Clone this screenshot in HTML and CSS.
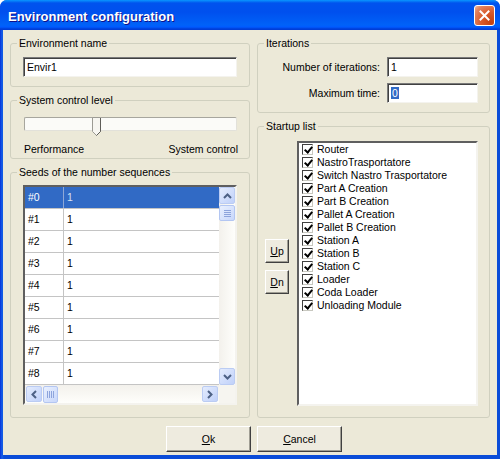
FILE: index.html
```html
<!DOCTYPE html>
<html lang="en">
<head>
    <meta charset="UTF-8">
    <title>Environment configuration</title>
    <link rel="stylesheet" href="styles.css">
</head>
<body>
    <div class="window">
        <div class="titlebar">
            <span class="title">Environment configuration</span>
            <span class="close">
                <svg width="11" height="11" viewBox="0 0 11 11"><path d="M1.5 1.5 L9.5 9.5 M9.5 1.5 L1.5 9.5" stroke="#fff" stroke-width="2" stroke-linecap="square"/></svg>
            </span>
        </div>

        <div class="client">
            <div class="columns">
                <!-- Left column -->
                <div class="col col-left">
                    <fieldset class="group group-name">
                        <legend>Environment name</legend>
                        <div class="name-body">
                            <div class="textbox">Envir1</div>
                        </div>
                    </fieldset>

                    <fieldset class="group group-level">
                        <legend>System control level</legend>
                        <div class="level-body">
                            <div class="slider">
                                <div class="track"></div>
                                <svg class="thumb" width="10" height="19" viewBox="0 0 10 19"><path d="M0.5 0.5 H8.5 V14.5 L4.5 18.5 L0.5 14.5 Z" fill="#F7F6F1" stroke="#9C9B94"/><path d="M8.5 1 V14.5 L4.5 18.5" fill="none" stroke="#5E5D58"/></svg>
                            </div>
                            <div class="slider-labels">
                                <span>Performance</span>
                                <span>System control</span>
                            </div>
                        </div>
                    </fieldset>

                    <fieldset class="group group-seeds">
                        <legend>Seeds of the number sequences</legend>
                        <div class="seeds-body">
                            <div class="grid">
                                <div class="grid-main">
                                    <div class="rows">
                                        <div class="row selected"><span class="cell-key">#0</span><span class="cell-val">1</span></div>
                                        <div class="row"><span class="cell-key">#1</span><span class="cell-val">1</span></div>
                                        <div class="row"><span class="cell-key">#2</span><span class="cell-val">1</span></div>
                                        <div class="row"><span class="cell-key">#3</span><span class="cell-val">1</span></div>
                                        <div class="row"><span class="cell-key">#4</span><span class="cell-val">1</span></div>
                                        <div class="row"><span class="cell-key">#5</span><span class="cell-val">1</span></div>
                                        <div class="row"><span class="cell-key">#6</span><span class="cell-val">1</span></div>
                                        <div class="row"><span class="cell-key">#7</span><span class="cell-val">1</span></div>
                                        <div class="row"><span class="cell-key">#8</span><span class="cell-val">1</span></div>
                                    </div>
                                    <div class="vscroll">
                                        <span class="sb-btn"><svg width="9" height="6" viewBox="0 0 9 6"><path d="M1 5 L4.5 1.5 L8 5" fill="none" stroke="#4D6185" stroke-width="2"/></svg></span>
                                        <span class="sb-thumb v-thumb"><i></i><i></i><i></i><i></i></span>
                                        <span class="sb-fill"></span>
                                        <span class="sb-btn"><svg width="9" height="6" viewBox="0 0 9 6"><path d="M1 1 L4.5 4.5 L8 1" fill="none" stroke="#4D6185" stroke-width="2"/></svg></span>
                                    </div>
                                </div>
                                <div class="grid-foot">
                                    <div class="hscroll">
                                        <span class="sb-btn"><svg width="6" height="9" viewBox="0 0 6 9"><path d="M5 1 L1.5 4.5 L5 8" fill="none" stroke="#4D6185" stroke-width="2"/></svg></span>
                                        <span class="sb-thumb h-thumb"><i></i><i></i><i></i><i></i></span>
                                        <span class="sb-fill"></span>
                                        <span class="sb-btn"><svg width="6" height="9" viewBox="0 0 6 9"><path d="M1 1 L4.5 4.5 L1 8" fill="none" stroke="#4D6185" stroke-width="2"/></svg></span>
                                    </div>
                                    <div class="corner"></div>
                                </div>
                            </div>
                        </div>
                    </fieldset>
                </div>

                <!-- Right column -->
                <div class="col col-right">
                    <fieldset class="group group-iter">
                        <legend>Iterations</legend>
                        <div class="iter-body">
                            <label>Number of iterations:</label>
                            <div class="textbox">1</div>
                            <label>Maximum time:</label>
                            <div class="textbox"><span class="sel">0</span></div>
                        </div>
                    </fieldset>

                    <fieldset class="group group-startup">
                        <legend>Startup list</legend>
                        <div class="startup-body">
                            <div class="updn">
                                <button class="btn small"><u>U</u>p</button>
                                <button class="btn small"><u>D</u>n</button>
                            </div>
                            <ul class="checklist">
                                <li><span class="check"></span>Router</li>
                                <li><span class="check"></span>NastroTrasportatore</li>
                                <li><span class="check"></span>Switch Nastro Trasportatore</li>
                                <li><span class="check"></span>Part A Creation</li>
                                <li><span class="check"></span>Part B Creation</li>
                                <li><span class="check"></span>Pallet A Creation</li>
                                <li><span class="check"></span>Pallet B Creation</li>
                                <li><span class="check"></span>Station A</li>
                                <li><span class="check"></span>Station B</li>
                                <li><span class="check"></span>Station C</li>
                                <li><span class="check"></span>Loader</li>
                                <li><span class="check"></span>Coda Loader</li>
                                <li><span class="check"></span>Unloading Module</li>
                            </ul>
                        </div>
                    </fieldset>
                </div>
            </div>

            <!-- Dialog buttons -->
            <div class="actions">
                <button class="btn wide"><u>O</u>k</button>
                <button class="btn wide"><u>C</u>ancel</button>
            </div>
        </div>
    </div>
</body>
</html>
```

FILE: styles.css
```css
* {
    box-sizing: border-box;
}

body {
    margin: 0;
    font-family: 'Liberation Sans', Arial, sans-serif;
    font-size: 10.5px;
    color: #000;
    background-color: #fff;
}

.window {
    width: 500px;
    height: 459px;
    display: flex;
    flex-direction: column;
    background: linear-gradient(to right, #0831D9, #1660E8 2px, #0A4CD8 4px);
    border-radius: 7px 7px 0 0;
    overflow: hidden;
}

/* Title bar */
.titlebar {
    height: 30px;
    flex: none;
    display: flex;
    align-items: center;
    justify-content: space-between;
    padding: 0 5px 0 8px;
    background: linear-gradient(to bottom, #0997FF 0, #0053EE 3px, #0050EE 12px, #0062F8 25px, #005BFF 27px, #003DD7 29px);
}

.title {
    color: #fff;
    font-weight: bold;
    font-size: 13px;
    padding-top: 2px;
    text-shadow: 1px 1px #0F1089;
}

.close {
    width: 21px;
    height: 21px;
    display: flex;
    align-items: center;
    justify-content: center;
    border: 1px solid #fff;
    border-radius: 3px;
    background: radial-gradient(circle at 85% 85%, #C4410F 0, #DA5B2C 45%, #E2835F 80%, #F0B9A0 100%);
}

/* Client area */
.client {
    flex: 1;
    margin: 0 3px 4px;
    padding: 6px 7px 3px;
    background-color: #ECE9D8;
    display: flex;
    flex-direction: column;
}

.columns {
    display: flex;
    gap: 7px;
    height: 382px;
}

.col {
    display: flex;
    flex-direction: column;
    gap: 6px;
}

.col-left {
    width: 240px;
}

.col-right {
    width: 233px;
}

/* Group boxes */
.group {
    margin: 0;
    padding: 0;
    min-width: 0;
    border: 1px solid #D0D0BF;
    border-radius: 3px;
}

.group legend {
    margin-left: 6px;
    padding: 0 2px;
    line-height: 14px;
}

.group-name {
    height: 51px;
}

.group-level {
    height: 66px;
}

.group-seeds,
.group-startup {
    flex: 1;
}

.group-iter {
    height: 77px;
}

.textbox {
    height: 20px;
    padding: 0 3px;
    line-height: 18px;
    background-color: #fff;
    border: 1px solid;
    border-color: #7A7A7A #F4F3EE #F4F3EE #7A7A7A;
    box-shadow: inset 1px 1px #404040;
}

.textbox .sel {
    background-color: #316AC5;
    color: #fff;
    padding: 0 1px;
}

.name-body {
    padding: 7px 12px 0 12px;
}

/* Slider */
.level-body {
    padding: 8px 11px 0 13px;
}

.slider {
    position: relative;
    height: 19px;
    margin-right: 1px;
}

.track {
    margin-top: 2px;
    height: 14px;
    background-color: #FBFBF8;
    border: 1px solid;
    border-color: #A7A69E #E2E1DA #E2E1DA #A7A69E;
    border-radius: 2px;
}

.thumb {
    position: absolute;
    left: 68px;
    top: 0;
}

.slider-labels {
    display: flex;
    justify-content: space-between;
    margin-top: 6px;
    line-height: 14px;
}

/* Seeds grid */
.seeds-body {
    padding: 6px 12px 0 12px;
}

.grid {
    width: 214px;
    height: 220px;
    border: 2px solid;
    border-color: #5F5F5F #F4F3EE #F4F3EE #5F5F5F;
    background-color: #fff;
}

.grid-main {
    display: flex;
    height: 198px;
}

.rows {
    width: 194px;
}

.row {
    display: flex;
    height: 22px;
    line-height: 21px;
    border-bottom: 1px solid #C4C4C4;
}

.cell-key {
    width: 39px;
    padding-left: 3px;
    border-right: 1px solid #C4C4C4;
}

.cell-val {
    padding-left: 3px;
}

.row.selected {
    background-color: #316AC5;
    color: #fff;
}

.row.selected .cell-key {
    border-right-color: #8EA8D6;
}

.row.selected .cell-val {
    color: #D8E2F4;
}

.vscroll {
    width: 16px;
    display: flex;
    flex-direction: column;
    background: linear-gradient(to right, #F3F1EC, #FEFEFB);
}

.sb-btn {
    flex: none;
    width: 16px;
    height: 17px;
    display: flex;
    align-items: center;
    justify-content: center;
    border: 1px solid #BBCCF3;
    border-radius: 2px;
    background: linear-gradient(135deg, #E4ECFD, #C0D1FA);
}

.sb-thumb {
    flex: none;
    display: flex;
    align-items: center;
    justify-content: center;
    gap: 1px;
    border: 1px solid #B3C6F2;
    border-radius: 2px;
    background: linear-gradient(135deg, #E9F0FE, #C8D7FB);
}

.sb-thumb i {
    display: block;
    background-color: #8DA4DC;
}

.v-thumb {
    height: 16px;
    margin-top: 1px;
    flex-direction: column;
}

.v-thumb i {
    width: 7px;
    height: 1px;
    margin: 0;
}

.h-thumb {
    width: 15px;
    margin-left: 1px;
}

.h-thumb i {
    width: 1px;
    height: 7px;
}

.sb-fill {
    flex: 1;
}

.grid-foot {
    display: flex;
    height: 18px;
}

.hscroll {
    width: 194px;
    display: flex;
    padding: 1px 1px 0 1px;
    background: linear-gradient(to bottom, #F3F1EC, #FEFEFB);
}

.hscroll .sb-btn {
    width: 16px;
    height: 16px;
}

.corner {
    flex: 1;
    background-color: #F6F5F0;
}

/* Iterations */
.iter-body {
    display: grid;
    grid-template-columns: 1fr 91px;
    gap: 6px 7px;
    padding: 7px 11px 0 0;
}

.iter-body label {
    text-align: right;
    line-height: 20px;
}

/* Startup list */
.startup-body {
    display: flex;
    gap: 8px;
    padding: 8px 11px 0 7px;
}

.updn {
    display: flex;
    flex-direction: column;
    gap: 7px;
    padding-top: 98px;
}

.checklist {
    flex: 1;
    height: 265px;
    margin: 0;
    padding: 0 0 0 3px;
    list-style: none;
    background-color: #fff;
    border: 2px solid;
    border-color: #5F5F5F #F4F3EE #F4F3EE #5F5F5F;
}

.checklist li {
    display: flex;
    align-items: center;
    height: 13px;
    line-height: 13px;
    white-space: nowrap;
}

.check {
    position: relative;
    width: 11px;
    height: 11px;
    margin-right: 4px;
    background-color: #fff;
    border: 1px solid;
    border-color: #404040 #C8C8C0 #C8C8C0 #404040;
}

.check::after {
    content: "";
    position: absolute;
    left: 3px;
    top: 0;
    width: 3px;
    height: 6px;
    border: solid #000;
    border-width: 0 2px 2px 0;
    transform: rotate(40deg);
}

/* Buttons */
.btn {
    font-family: inherit;
    font-size: 10.5px;
    color: #000;
    padding: 0;
    background-color: #EEEBDF;
    border: 1px solid;
    border-color: #FFFFFF #404040 #404040 #FFFFFF;
    box-shadow: inset -1px -1px #A09E94;
}

.btn.small {
    width: 24px;
    height: 24px;
}

.btn.wide {
    width: 85px;
    height: 26px;
}

.actions {
    display: flex;
    justify-content: center;
    gap: 6px;
    margin-top: 8px;
    padding-left: 8px;
}
```
